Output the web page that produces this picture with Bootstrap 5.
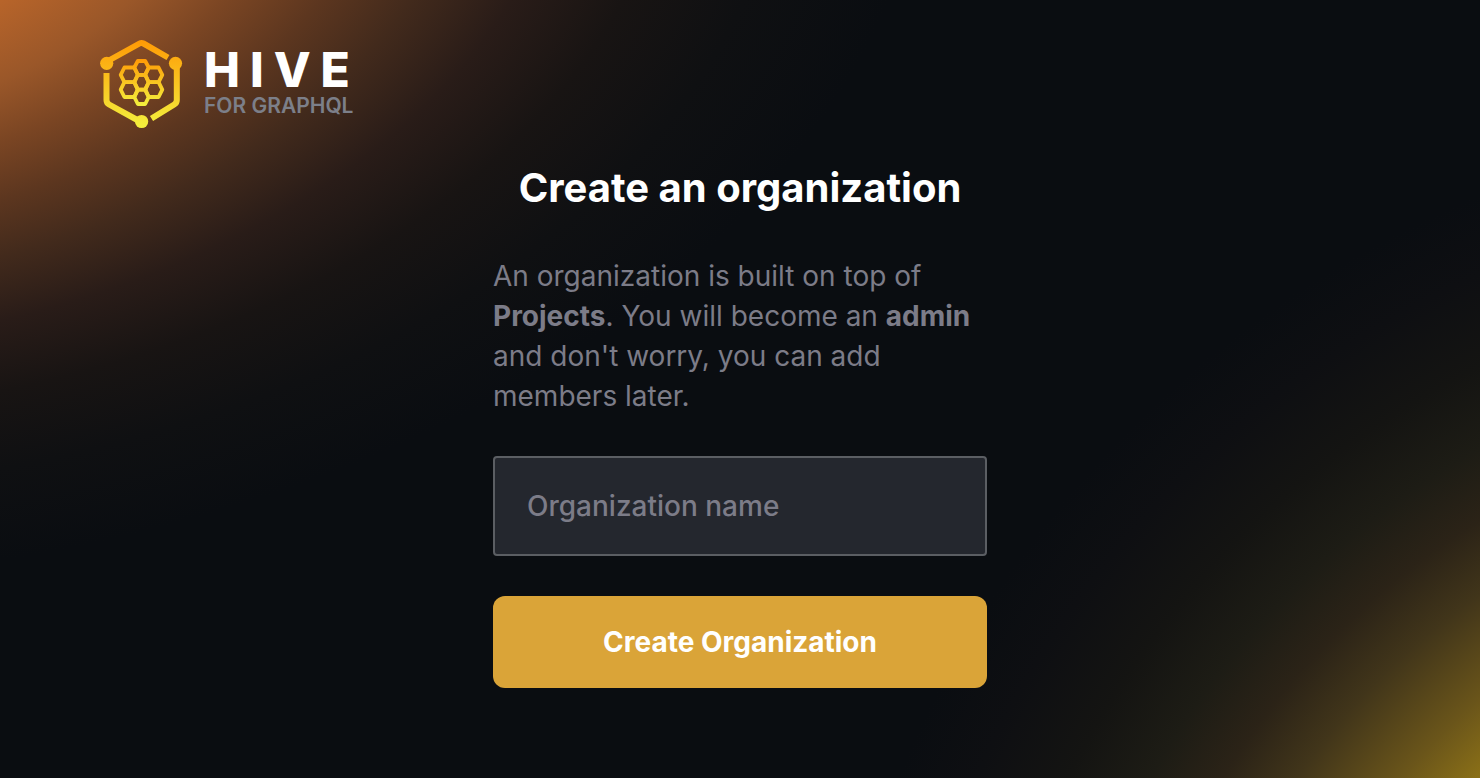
<!DOCTYPE html>
<html lang="en">
<head>
<meta charset="utf-8">
<meta name="viewport" content="width=device-width, initial-scale=1">
<title>Create an organization</title>
<link href="https://cdn.jsdelivr.net/npm/bootstrap@5.3.0/dist/css/bootstrap.min.css" rel="stylesheet">
<style>
  body {
    font-family: Inter, "Liberation Sans", sans-serif;
    color: #7c7c88;
    background:
      radial-gradient(1160px 740px at -300px -200px, #b9652a 37%, #9a5729 46%, #7a4523 53%, #5c361f 60%, #422a1c 67%, #291c18 75%, #181413 84%, #0f1012 94%, rgba(10, 13, 17, 0) 106%),
      radial-gradient(circle 1040px at calc(100% + 400px) calc(100% + 400px), #8d7217 54%, #6a551a 60%, #41351a 68%, #2b2317 74%, #1d1c15 80%, #141412 87%, #0e0f12 95%, #0a0d11 102%);
    background-color: #0a0d11;
  }
  .site-head { padding: 36px 96px 0; }
  .brand-link { gap: 18px; }
  .hive-mark { width: 90px; height: 96px; }
  .wordmark-top { font: 800 48px/44px Inter, sans-serif; letter-spacing: 10px; color: #fff; }
  .wordmark-sub { font: 600 21px/28px Inter, sans-serif; color: #7c7f89; }
  .org-main { padding: 26px 16px 40px; }
  .org-panel { width: 100%; max-width: 494px; }
  .org-title { font-size: 40px; line-height: 48px; font-weight: 700; color: #fff; }
  .org-text { font-size: 28px; line-height: 40px; margin: 44px 0 40px; }
  .org-text strong { font-weight: 700; }
  .org-field, .org-field:focus {
    font-size: 28px; line-height: 40px; font-weight: 500;
    padding: 28px 32px; color: #fff; background: #24272e;
    border: 2px solid #5b5e63; border-radius: 4px;
  }
  .org-field::placeholder { color: #7c7c88; }
  .org-submit, .org-submit:hover {
    font-size: 28px; line-height: 40px; font-weight: 700;
    margin-top: 40px; padding: 26px 32px; border: 0; border-radius: 12px;
    color: #fff; background: #daa438;
  }
</style>
</head>
<body class="min-vh-100">
<header class="site-head">
  <a href="#" class="brand-link d-inline-flex align-items-center text-decoration-none" aria-label="Hive for GraphQL">
    <svg class="hive-mark" viewBox="96 36 90 96" aria-hidden="true">
      <defs>
        <linearGradient id="honey" gradientUnits="userSpaceOnUse" x1="0" y1="40" x2="0" y2="128">
          <stop offset="0" stop-color="#ff9a05"/><stop offset="1" stop-color="#f3f13e"/>
        </linearGradient>
        <linearGradient id="comb" gradientUnits="userSpaceOnUse" x1="0" y1="59" x2="0" y2="106">
          <stop offset="0" stop-color="#ff9a05"/><stop offset="1" stop-color="#f3f13e"/>
        </linearGradient>
      </defs>
      <g fill="none" stroke="url(#honey)" stroke-width="6">
        <path d="M107 61.500L139.500 43.500Q141.500 42.400 143.500 43.500L168 57.500"/>
        <path d="M176.800 63V100Q176.800 103 174.200 104.500L151.500 118.500"/>
        <path d="M106.500 73V100Q106.500 103 109.100 104.500L141 122"/>
      </g>
      <g fill="url(#honey)">
        <circle cx="106.700" cy="63.300" r="6.600"/><circle cx="175.500" cy="63.300" r="6.600"/><circle cx="141.600" cy="121.500" r="6.600"/>
      </g>
      <g fill="none" stroke="url(#comb)" stroke-width="3.800" stroke-linejoin="round">
        <path d="M134.300 67.500L137.800 61H145.200L148.700 67.500L145.200 74.800H137.800Z"/>
        <path d="M134.300 82.200L137.800 74.800H145.200L148.700 82.200L145.200 89.600H137.800Z"/>
        <path d="M134.300 97L137.800 89.600H145.200L148.700 97L145.200 104H137.800Z"/>
        <path d="M120.700 74.800L124.400 67.500H134.300L137.800 74.800L134.300 82.200H124.400Z"/>
        <path d="M120.700 89.600L124.400 82.200H134.300L137.800 89.600L134.300 97H124.400Z"/>
        <path d="M145.200 74.800L148.700 67.500H158.600L162.300 74.800L158.600 82.200H148.700Z"/>
        <path d="M145.200 89.600L148.700 82.200H158.600L162.300 89.600L158.600 97H148.700Z"/>
      </g>
    </svg>
    <span class="d-flex flex-column">
      <span class="wordmark-top">HIVE</span>
      <span class="wordmark-sub">FOR GRAPHQL</span>
    </span>
  </a>
</header>
<main class="org-main d-flex justify-content-center">
  <form class="org-panel d-flex flex-column">
    <h1 class="org-title text-center mb-0">Create an organization</h1>
    <p class="org-text">An organization is built on top of <strong>Projects</strong>. You will become an <strong>admin</strong> and don't worry, you can add members later.</p>
    <input type="text" class="form-control org-field" placeholder="Organization name" aria-label="Organization name">
    <button type="button" class="btn org-submit w-100">Create Organization</button>
  </form>
</main>
<script src="https://cdn.jsdelivr.net/npm/bootstrap@5.3.0/dist/js/bootstrap.bundle.min.js"></script>
</body>
</html>
